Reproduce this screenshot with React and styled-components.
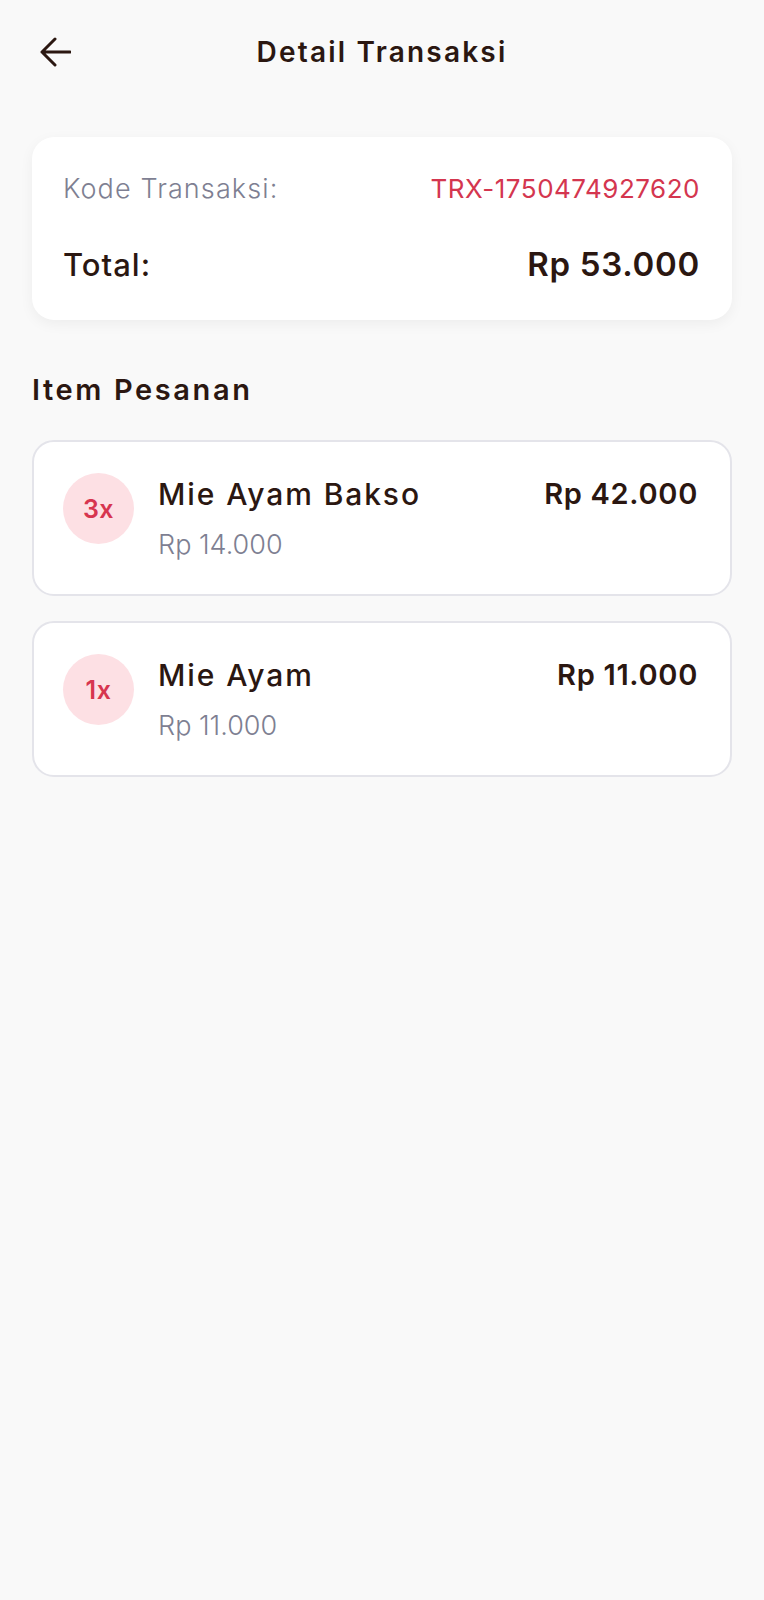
import React from "react";
import styled, { createGlobalStyle } from "styled-components";

const Global = createGlobalStyle`
  html, body { margin: 0; padding: 0; background: #f9f9f9; }
  body { font-family: "Inter", "Noto Sans", sans-serif; color: #2b1711; }
  * { box-sizing: border-box; }
`;

const Page = styled.div`
  min-height: 1600px;
  background: #f9f9f9;
`;

const Header = styled.header`
  height: 104px;
  display: grid;
  grid-template-columns: 1fr auto 1fr;
  align-items: center;
  padding: 0 39px;
`;

const BackButton = styled.button`
  justify-self: start;
  width: 32px;
  height: 30px;
  padding: 0;
  border: none;
  background: none;
  display: flex;
  color: #2b1711;
  cursor: pointer;
`;

const Title = styled.h1`
  margin: 0;
  font-size: 28px;
  font-weight: 600;
  letter-spacing: 2.2px;
  color: #2b1711;
`;

const Content = styled.main`
  padding: 33px 32px 0;
  display: flex;
  flex-direction: column;
`;

const SummaryCard = styled.section`
  background: #fff;
  border-radius: 22px;
  padding: 34px 32px 36px 31px;
  box-shadow: 0 4px 14px rgba(0, 0, 0, 0.05);
  display: flex;
  flex-direction: column;
  gap: 39px;
`;

const SummaryRow = styled.div`
  display: flex;
  justify-content: space-between;
  align-items: center;
  height: ${(p) => p.$h}px;
`;

const Label = styled.span`
  font-size: ${(p) => p.$size}px;
  font-weight: ${(p) => p.$weight};
  letter-spacing: ${(p) => p.$ls || 0}px;
  color: ${(p) => p.$color};
`;

const SectionTitle = styled.h2`
  margin: 50px 0 30px;
  font-size: 29px;
  line-height: 40px;
  font-weight: 600;
  letter-spacing: 2.6px;
  color: #2b1711;
`;

const ItemList = styled.div`
  display: flex;
  flex-direction: column;
  gap: 25px;
`;

const ItemCard = styled.div`
  background: #fff;
  border: 2px solid #e4e4ea;
  border-radius: 22px;
  padding: 31px 32px 32px 29px;
  display: flex;
  align-items: flex-start;
`;

const Badge = styled.div`
  width: 71px;
  height: 71px;
  border-radius: 50%;
  background: #fde0e4;
  color: #d7354f;
  font-size: 25px;
  font-weight: 600;
  letter-spacing: 0.5px;
  display: flex;
  align-items: center;
  justify-content: center;
  flex-shrink: 0;
  margin-right: 24px;
`;

const Info = styled.div`
  flex: 1;
  display: flex;
  flex-direction: column;
  padding-top: 3px;
  gap: 16px;
`;

const ItemName = styled.div`
  font-size: 30px;
  line-height: 36px;
  font-weight: 500;
  letter-spacing: 1.9px;
  color: #2b1711;
`;

const UnitPrice = styled.div`
  font-size: 27px;
  line-height: 34px;
  font-weight: 300;
  color: #7e7f92;
`;

const ItemTotal = styled.div`
  padding-top: 3px;
  font-size: 29px;
  line-height: 36px;
  font-weight: 600;
  letter-spacing: 0.7px;
  color: #2b1711;
`;

const ArrowIcon = () => (
  <svg width="32" height="30" viewBox="0 0 32 30" fill="none">
    <path
      d="M3 15H31M16 2L3 15L16 28"
      stroke="currentColor"
      strokeWidth="3"
      strokeLinecap="round"
      strokeLinejoin="round"
    />
  </svg>
);

const items = [
  { qty: 3, name: "Mie Ayam Bakso", price: "Rp 14.000", total: "Rp 42.000" },
  { qty: 1, name: "Mie Ayam", price: "Rp 11.000", total: "Rp 11.000" },
];

export default function App() {
  return (
    <Page>
      <Global />
      <Header>
        <BackButton aria-label="Kembali">
          <ArrowIcon />
        </BackButton>
        <Title>Detail Transaksi</Title>
        <span />
      </Header>
      <Content>
        <SummaryCard>
          <SummaryRow $h={34}>
            <Label $size={27} $weight={300} $ls={1.1} $color="#7e7f92">
              Kode Transaksi:
            </Label>
            <Label $size={26} $weight={400} $ls={0.5} $color="#d4364f">
              TRX-1750474927620
            </Label>
          </SummaryRow>
          <SummaryRow $h={40}>
            <Label $size={31} $weight={500} $ls={1} $color="#2b1711">
              Total:
            </Label>
            <Label $size={33} $weight={600} $ls={0.7} $color="#2b1711">
              Rp 53.000
            </Label>
          </SummaryRow>
        </SummaryCard>
        <SectionTitle>Item Pesanan</SectionTitle>
        <ItemList>
          {items.map((it) => (
            <ItemCard key={it.name}>
              <Badge>{it.qty}x</Badge>
              <Info>
                <ItemName>{it.name}</ItemName>
                <UnitPrice>{it.price}</UnitPrice>
              </Info>
              <ItemTotal>{it.total}</ItemTotal>
            </ItemCard>
          ))}
        </ItemList>
      </Content>
    </Page>
  );
}
